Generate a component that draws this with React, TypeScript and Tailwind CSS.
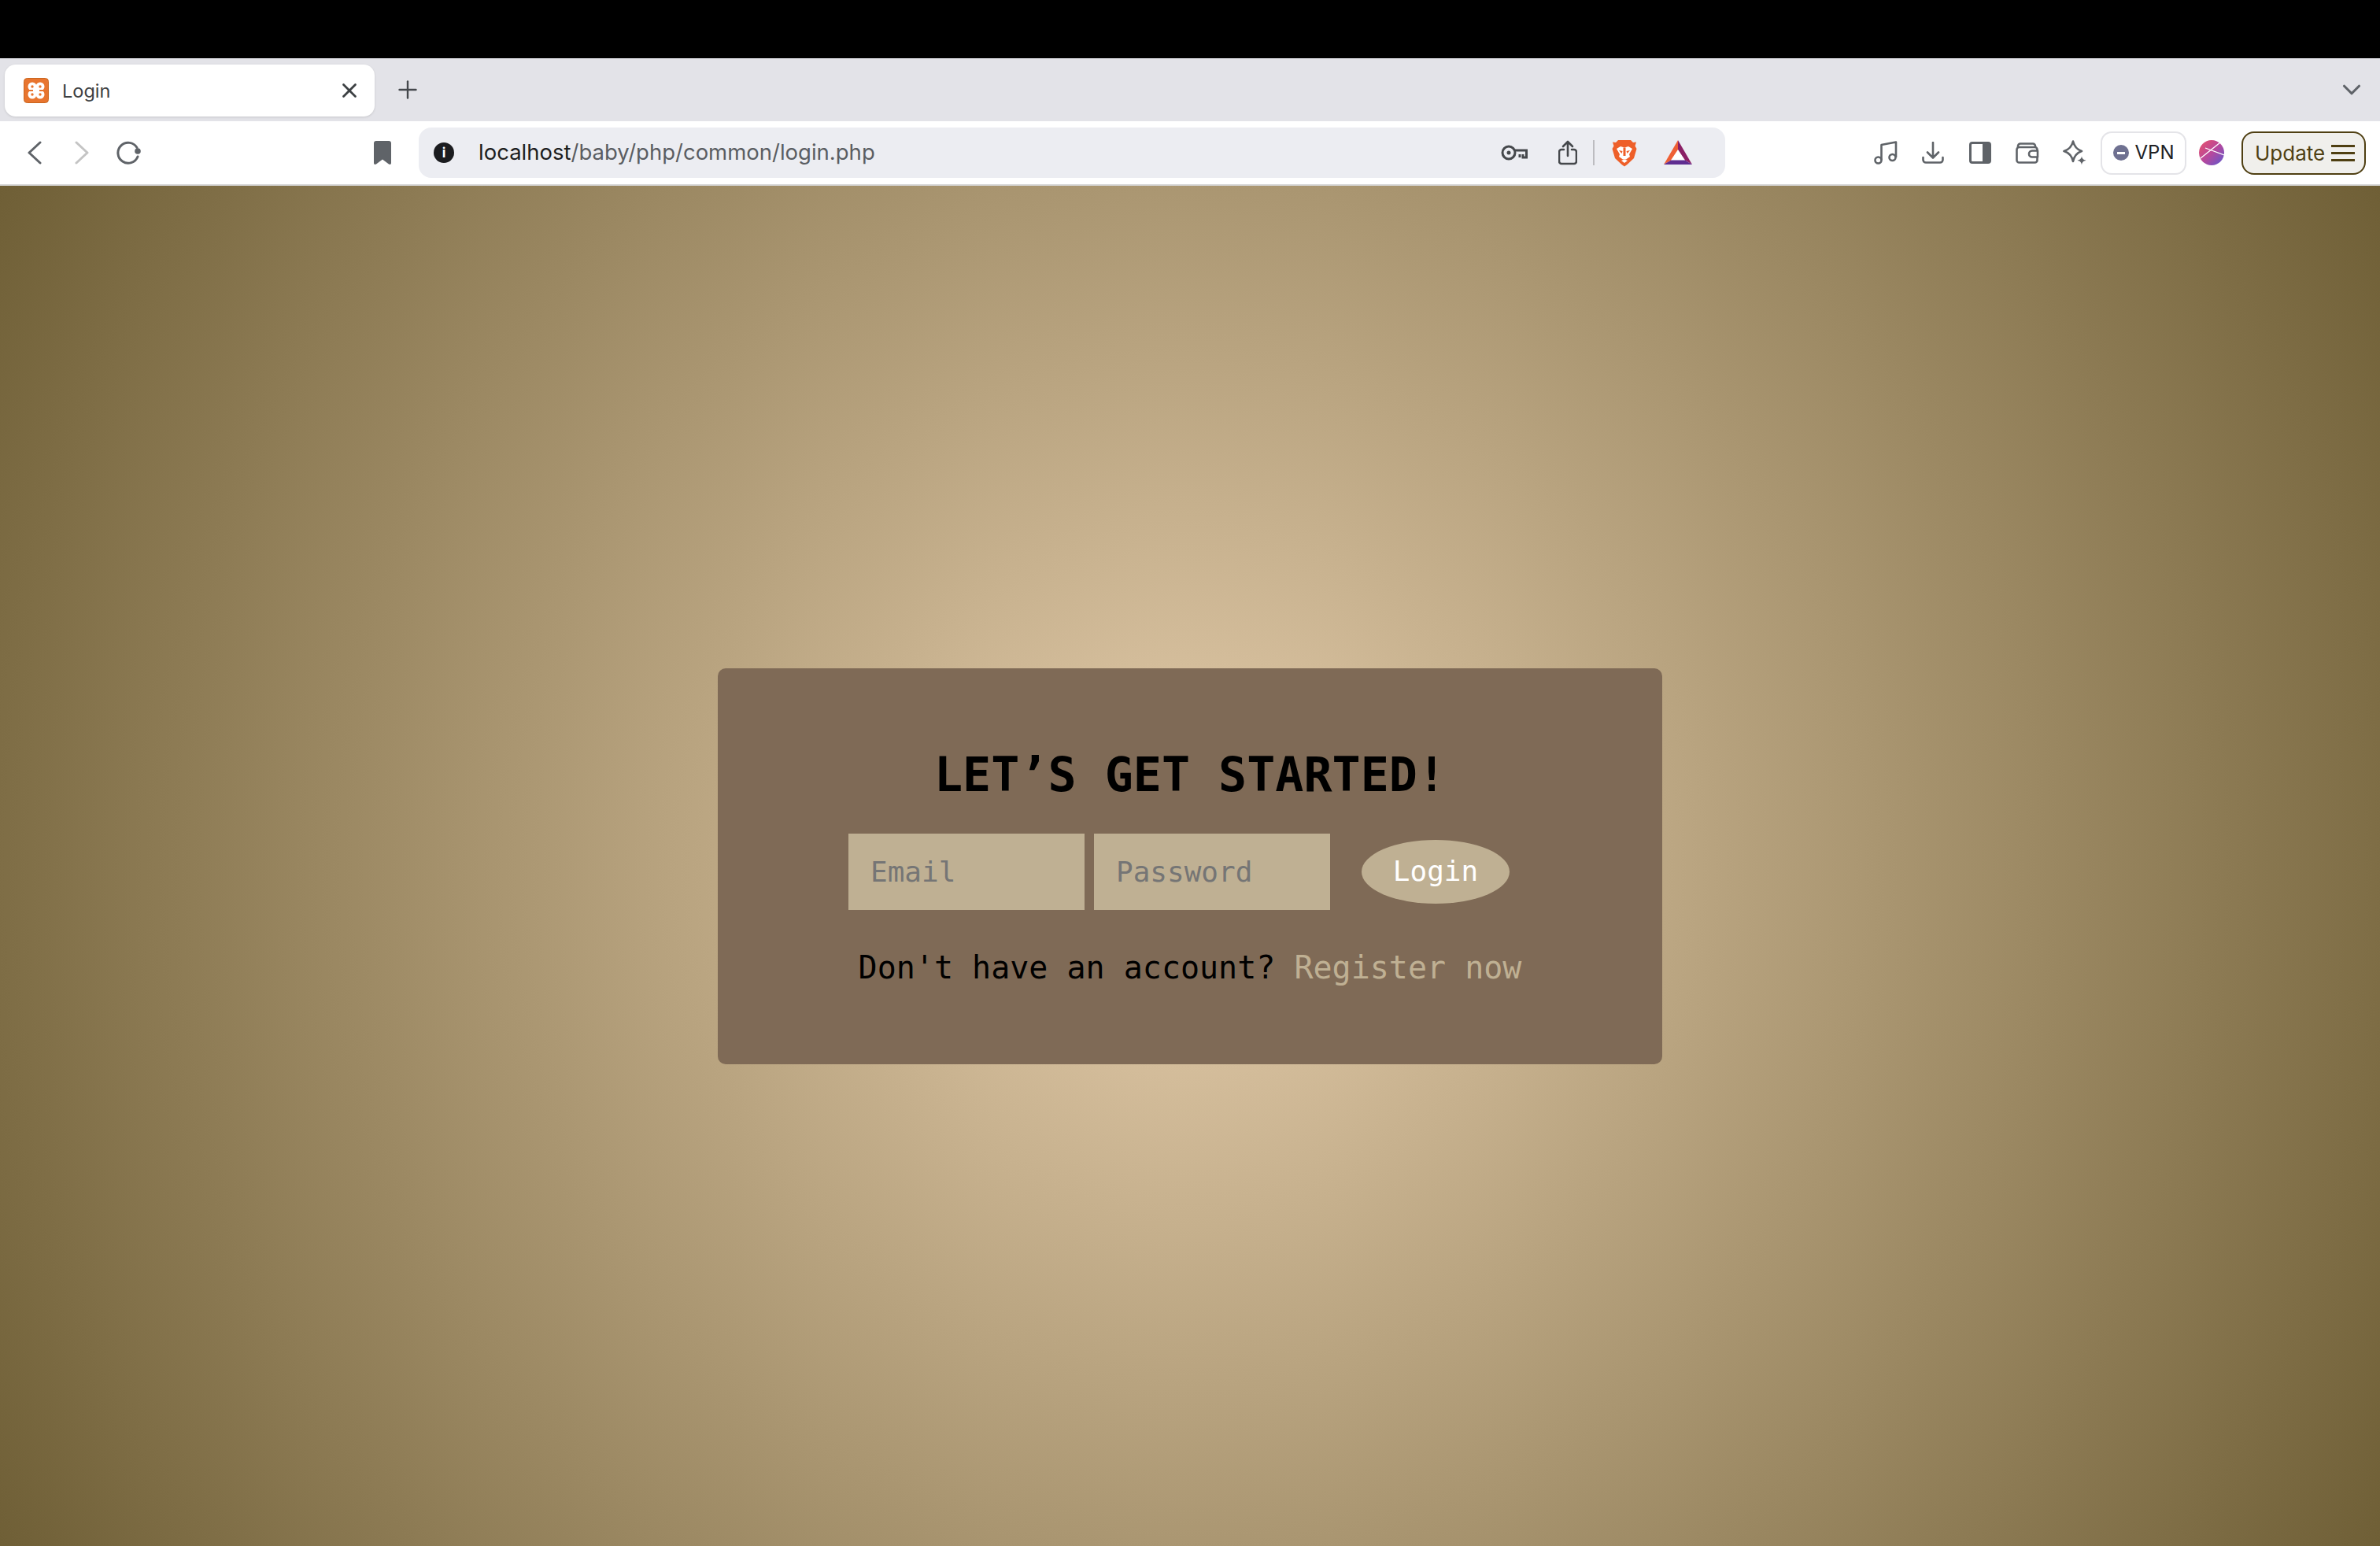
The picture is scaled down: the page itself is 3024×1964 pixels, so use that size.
import { ChevronDown, Plus, X } from 'lucide-react'

const SANS = "font-['Inter','Liberation_Sans',sans-serif]"

function XamppIcon() {
  return (
    <svg width="32" height="32" viewBox="0 0 32 32">
      <rect x="0.500" y="0.500" width="31" height="31" rx="4" fill="#e8752f" stroke="#c9661f" />
      <g fill="#fff">
        <circle cx="11" cy="11" r="5.500" />
        <circle cx="21" cy="11" r="5.500" />
        <circle cx="11" cy="21" r="5.500" />
        <circle cx="21" cy="21" r="5.500" />
        <rect x="13" y="11" width="6" height="10" />
      </g>
      <g fill="#e8752f">
        <circle cx="11" cy="11" r="1.700" />
        <circle cx="21" cy="11" r="1.700" />
        <circle cx="11" cy="21" r="1.700" />
        <circle cx="21" cy="21" r="1.700" />
        <rect x="4" y="15" width="8" height="2" />
        <rect x="20" y="15" width="8" height="2" />
      </g>
    </svg>
  )
}

function BraveIcon() {
  return (
    <svg width="32" height="35" viewBox="0 0 32 35">
      <path d="M8 1h16l3 3 4-.5-1.500 5L31.500 12 28 24l-8.500 8-3.500 2.500-3.500-2.500L4 24 .5 12l2-3.500L1 3.500 5 4z" fill="#ee5f29" />
      <path d="M6 12l5-3 5 1.500L21 9l5 3-4 7 1 3-5 3.500h-4L9 22l1-3z" fill="#fff" />
      <path d="M9 14l4.500 1-1 3zM23 14l-4.500 1 1 3zM14.500 10.500h3V21h-3z" fill="#ee5f29" />
      <path d="M12 27l4-1.500 4 1.500-4 3z" fill="#fff" />
    </svg>
  )
}

function BatIcon() {
  return (
    <svg width="36" height="32" viewBox="0 0 36 32">
      <path d="M18 0L0 31h36z" fill="#fff" />
      <path d="M18 0v12l-9 13.500L0 31z" fill="#ee5f35" />
      <path d="M18 0l18 31-9-5.500L18 12z" fill="#8a2066" />
      <path d="M0 31l9-5.500h18l9 5.500z" fill="#5f2d91" />
    </svg>
  )
}

function ProfileIcon() {
  return (
    <svg width="32" height="32" viewBox="0 0 32 32">
      <defs>
        <linearGradient id="profile-fill" x1="0" y1="0" x2="1" y2="1">
          <stop offset="0" stopColor="#ea5268" />
          <stop offset="0.5" stopColor="#b8489c" />
          <stop offset="1" stopColor="#5b58d0" />
        </linearGradient>
      </defs>
      <circle cx="16" cy="16" r="16" fill="url(#profile-fill)" />
      <path d="M2 23L27 3M8 10l24 9" stroke="#fff" strokeWidth="1.300" fill="none" />
    </svg>
  )
}

function ToolIcon({ children }: { children: React.ReactNode }) {
  return <div className="flex h-[60px] w-[60px] shrink-0 items-center justify-center">{children}</div>
}

function TabStrip() {
  return (
    <div className={`flex h-[80px] items-center bg-[#e3e3e8] pl-[6px] pr-[17px] ${SANS}`}>
      <div className="mt-[2px] flex h-[66px] w-[470px] items-center rounded-[14px] bg-white pl-[24px] pr-[17px] shadow-[0_1px_3px_rgba(0,0,0,0.12)]">
        <XamppIcon />
        <span className="ml-[17px] flex-1 pt-[2px] text-[23.500px] text-[#3c4043]">Login</span>
        <X size={30} strokeWidth={2.200} className="text-[#3c4043]" />
      </div>
      <Plus size={36} strokeWidth={1.600} className="ml-[24px] text-[#45484c]" />
      <ChevronDown size={38} strokeWidth={2} className="ml-auto text-[#5f6368]" />
    </div>
  )
}

function Toolbar() {
  return (
    <div className={`flex h-[82px] items-center border-b-2 border-[#d6d6d6] bg-white pl-[14px] ${SANS}`}>
      <ToolIcon>
        <svg width="18" height="30" viewBox="0 0 18 30" fill="none" stroke="#5f6368" strokeWidth="3" strokeLinecap="round" strokeLinejoin="round">
          <path d="M16 2L2 15l14 13" />
        </svg>
      </ToolIcon>
      <ToolIcon>
        <svg width="18" height="30" viewBox="0 0 18 30" fill="none" stroke="#c4c4c4" strokeWidth="3" strokeLinecap="round" strokeLinejoin="round">
          <path d="M2 2l14 13L2 28" />
        </svg>
      </ToolIcon>
      <ToolIcon>
        <svg width="32" height="30" viewBox="0 0 32 30" fill="none" stroke="#5f6368" strokeWidth="3" strokeLinecap="round">
          <path d="M26 8.500A13 13 0 1 0 27 20" />
          <circle cx="27" cy="13" r="3.800" fill="#5f6368" stroke="none" />
        </svg>
      </ToolIcon>
      <div className="ml-[262px] flex h-[60px] w-[60px] items-center justify-center">
        <svg width="22" height="30" viewBox="0 0 22 30">
          <path d="M3 0h16a3 3 0 0 1 3 3v25c0 2-1.500 2.500-3 1.500l-8-6-8 6c-1.500 1-3 .5-3-1.500V3a3 3 0 0 1 3-3z" fill="#5f6368" />
        </svg>
      </div>
      <div className="ml-[16px] flex h-[64px] w-[1660px] items-center rounded-[16px] bg-[#ecedf2] pl-[19px]">
        <div className="flex h-[26px] w-[26px] items-center justify-center rounded-full bg-[#1b1c1f] text-[17px] font-bold leading-none text-white">i</div>
        <div className="ml-[31px] flex-1 text-[27.500px] text-[#5a5d62]"><span className="text-[#1c1d20]">localhost</span>/baby/php/common/login.php</div>
        <svg width="34" height="20" viewBox="0 0 34 20" fill="none" stroke="#45484c" strokeWidth="3" className="mr-[39px]">
          <circle cx="10" cy="10" r="8" />
          <circle cx="10" cy="10" r="2.500" fill="#45484c" stroke="none" />
          <path d="M18 7h14.500v9H28v-4M24 12v4" />
        </svg>
        <svg width="24" height="32" viewBox="0 0 24 32" fill="none" stroke="#45484c" strokeWidth="2.600" strokeLinecap="round" strokeLinejoin="round" className="mr-[20px]">
          <path d="M7 12H4a3 3 0 0 0-3 3v12a3 3 0 0 0 3 3h16a3 3 0 0 0 3-3V15a3 3 0 0 0-3-3h-3" />
          <path d="M12 2v18M6 8l6-6 6 6" />
        </svg>
        <div className="mr-[22px] h-[32px] w-[2px] bg-[#bcbcc0]" />
        <BraveIcon />
        <div className="ml-[34px] mr-[42px]"><BatIcon /></div>
      </div>
      <div className="ml-[174px] flex items-center">
        <ToolIcon>
          <svg width="30" height="30" viewBox="0 0 30 30" fill="none" stroke="#5f6368" strokeWidth="2.600" strokeLinejoin="round">
            <circle cx="5.500" cy="24.500" r="4" />
            <circle cx="23.500" cy="21" r="4" />
            <path d="M9.500 24.500V5L28 1.500V21" />
          </svg>
        </ToolIcon>
        <ToolIcon>
          <svg width="28" height="28" viewBox="0 0 28 28" fill="none" stroke="#5f6368" strokeWidth="2.600" strokeLinecap="round" strokeLinejoin="round">
            <path d="M14 1v19M7 13.500l7 7 7-7" />
            <path d="M1.500 20v3a3.500 3.500 0 0 0 3.500 3.500h18a3.500 3.500 0 0 0 3.500-3.500v-3" />
          </svg>
        </ToolIcon>
        <ToolIcon>
          <svg width="28" height="28" viewBox="0 0 28 28">
            <rect x="1.500" y="1.500" width="25" height="25" rx="2.500" fill="none" stroke="#5f6368" strokeWidth="3" />
            <path d="M17 1.500h8a2 2 0 0 1 2 2v21a2 2 0 0 1-2 2h-8z" fill="#5f6368" />
          </svg>
        </ToolIcon>
        <ToolIcon>
          <svg width="30" height="27" viewBox="0 0 30 27" fill="none" stroke="#5f6368" strokeWidth="2.600" strokeLinejoin="round">
            <path d="M3 6V4.500A3 3 0 0 1 6 1.500h16A3 3 0 0 1 25 4.500V6" />
            <rect x="1.500" y="6" width="26" height="19.500" rx="3" />
            <path d="M28 10.500h-7a4 4 0 0 0 0 8h7z" fill="#fff" />
          </svg>
        </ToolIcon>
        <ToolIcon>
          <svg width="30" height="32" viewBox="0 0 30 32" fill="none" stroke="#5f6368" strokeWidth="2.600" strokeLinejoin="round">
            <path d="M13 1.500c1.500 6.500 5 10.500 11 12.500-6 2-9.500 6-11 13-1.500-7-5-11-11.500-13C8 12 11.500 8 13 1.500z" />
            <path d="M24 20.500c.6 3 1.700 4.200 5.500 5.200-3.800 1-4.900 2.300-5.500 5.800-.6-3.500-1.700-4.800-5.500-5.800 3.800-1 4.900-2.200 5.500-5.200z" fill="#5f6368" stroke="none" />
          </svg>
        </ToolIcon>
        <div className="ml-[3px] flex h-[55px] w-[109px] items-center justify-center gap-[8px] rounded-[14px] border-2 border-[#e4e4e8] text-[24px] text-[#202124]">
          <div className="flex h-[20px] w-[20px] items-center justify-center rounded-full bg-[#6f7191]">
            <div className="h-[3px] w-[10px] bg-white" />
          </div>
          VPN
        </div>
        <div className="ml-[16px]"><ProfileIcon /></div>
        <div className="ml-[22px] flex h-[55px] w-[158px] items-center gap-[8px] rounded-[16px] border-2 border-[#4f3f12] bg-[#f0efec] pl-[15px] text-[26px] text-[#4f3f12]">
          Update
          <div className="flex h-[21px] w-[30px] flex-col justify-between">
            <div className="h-[3px] bg-[#4f3f12]" />
            <div className="h-[3px] bg-[#4f3f12]" />
            <div className="h-[3px] bg-[#4f3f12]" />
          </div>
        </div>
      </div>
    </div>
  )
}

function LoginCard() {
  return (
    <div className="flex h-[503px] w-[1200px] flex-col items-center rounded-[10px] bg-[#7f6a56] pt-[100px] font-['DejaVu_Sans_Mono',monospace]">
      <h2 className="text-[60px] font-bold leading-[70px] text-black">LET’S GET STARTED!</h2>
      <form className="mt-[40px] flex items-center pr-[28px] text-[36px]">
        <input placeholder="Email" className="h-[97px] w-[300px] bg-[#bfb093] px-[28px] placeholder:text-[#757575]" />
        <input placeholder="Password" className="ml-[12px] h-[97px] w-[300px] bg-[#bfb093] px-[28px] placeholder:text-[#757575]" />
        <button type="button" className="ml-[40px] h-[81px] w-[188px] rounded-[50%] bg-[#bfb093] text-white">Login</button>
      </form>
      <p className="mt-[49px] text-[40px] leading-[48px] text-black">
        Don't have an account? <a className="text-[#bfb093]">Register now</a>
      </p>
    </div>
  )
}

export default function App() {
  return (
    <div className="flex h-[1964px] flex-col bg-black pt-[74px]">
      <TabStrip />
      <Toolbar />
      <main className="flex flex-1 items-center justify-center bg-[radial-gradient(circle,#e5cdac,#6f5f36)]">
        <LoginCard />
      </main>
    </div>
  )
}
